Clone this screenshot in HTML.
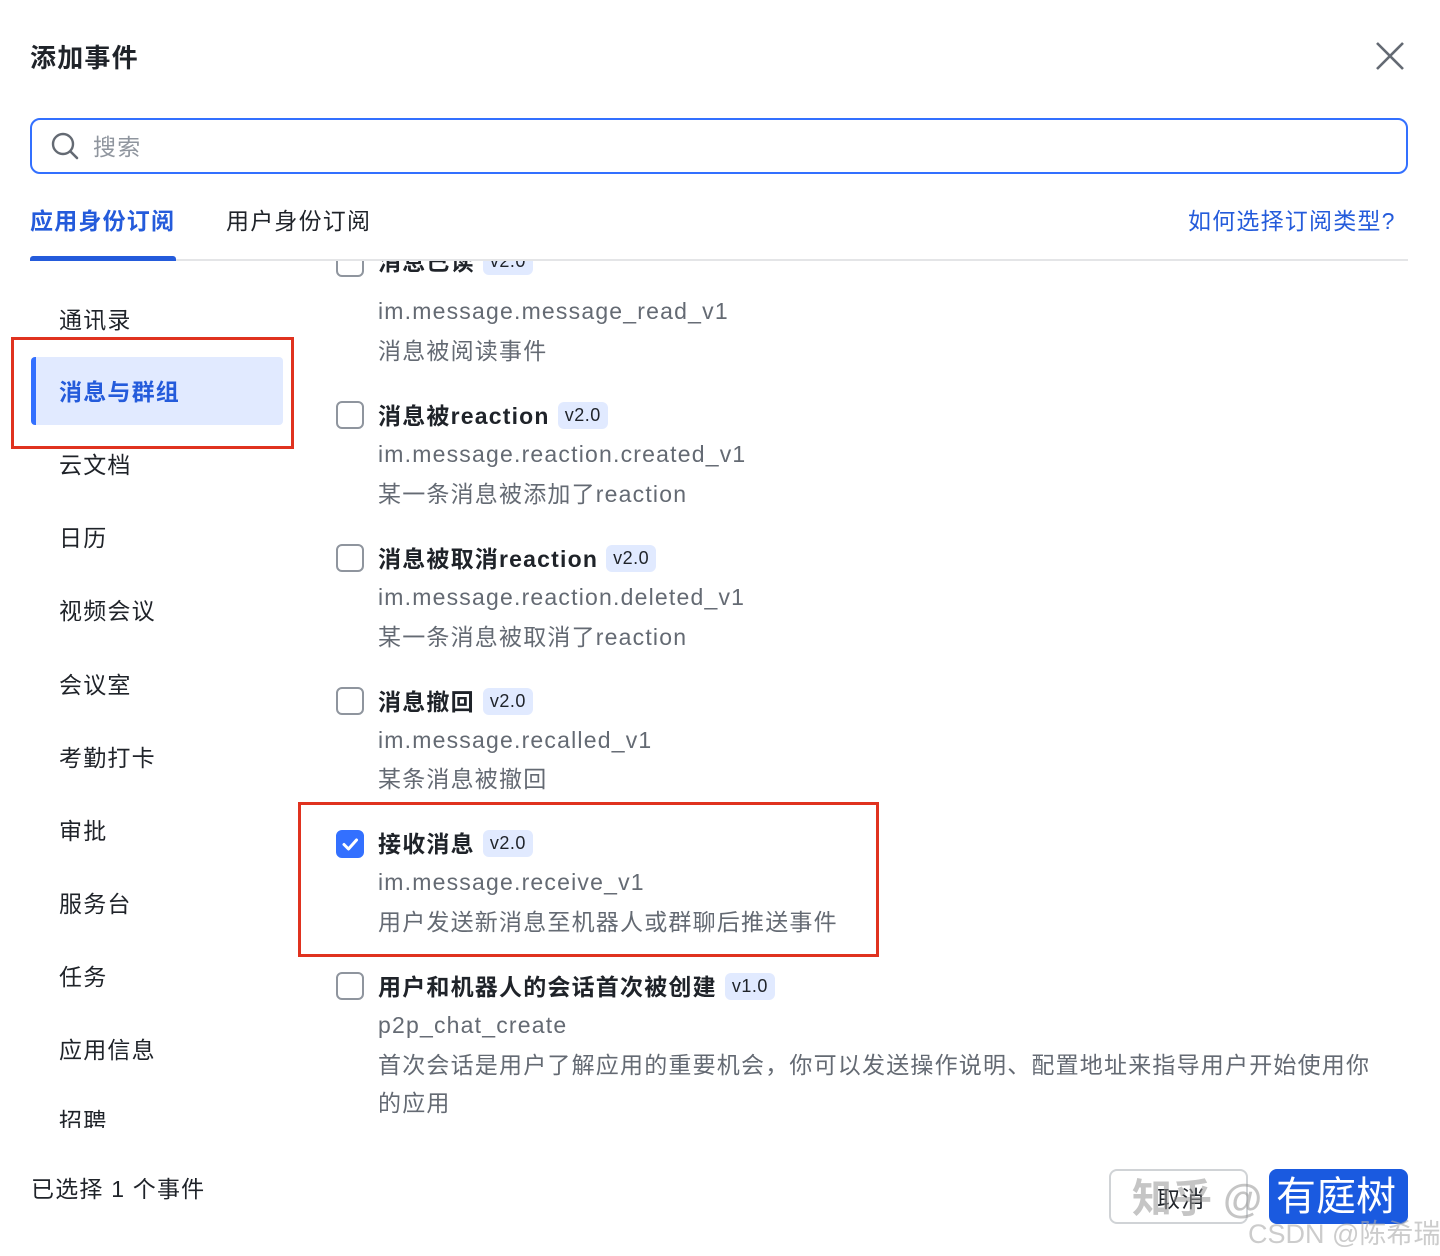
<!DOCTYPE html>
<html><head><meta charset="utf-8">
<style>
*{margin:0;padding:0;box-sizing:border-box}
body{width:1440px;height:1256px;background:#fff;font-family:"Liberation Sans","Noto Sans CJK SC",sans-serif;color:#1f2329;position:relative;overflow:hidden;letter-spacing:1.2px}
.a{position:absolute;white-space:nowrap}
.side{font-size:23px;color:#1f2329;left:59px}
.cb{position:absolute;left:336px;width:28px;height:28px;border:2px solid #8f959e;border-radius:6px;background:#fff}
.t{left:378px;font-size:23px;font-weight:bold;color:#1f2329}
.tag{display:inline-block;background:#e1eaff;color:#1f2329;font-size:18px;font-weight:normal;padding:3px 7px;border-radius:6px;margin-left:8px;vertical-align:3px;letter-spacing:0.5px}
.c{left:378px;font-size:23px;color:#646a73}
.red{position:absolute;border:3px solid #e0321f}
</style></head><body>
<div class="a" style="left:30px;top:38px;font-size:26px;font-weight:bold">添加事件</div>
<svg class="a" style="left:1374px;top:40px" width="32" height="32" viewBox="0 0 32 32"><path d="M3 3L29 29M29 3L3 29" stroke="#646a73" stroke-width="2.6"/></svg>
<div class="a" style="left:30px;top:118px;width:1378px;height:56px;border:2px solid #3370ff;border-radius:10px"></div>
<svg class="a" style="left:50px;top:131px" width="30" height="30" viewBox="0 0 30 30"><circle cx="13" cy="13" r="10" fill="none" stroke="#646a73" stroke-width="2.4"/><path d="M20.5 20.5L27 27" stroke="#646a73" stroke-width="2.6" stroke-linecap="round"/></svg>
<div class="a" style="left:93px;top:128px;font-size:23px;color:#8f959e">搜索</div>
<div class="a" style="left:30px;top:202px;font-size:23px;color:#245bdb;font-weight:bold">应用身份订阅</div>
<div class="a" style="left:226px;top:202px;font-size:23px">用户身份订阅</div>
<div class="a" style="left:1188px;top:202px;font-size:23px;color:#245bdb">如何选择订阅类型?</div>
<div class="a" style="left:30px;top:259px;width:1378px;height:2px;background:#e4e5e7"></div>
<div class="a" style="left:30px;top:256px;width:146px;height:5px;background:#245bdb;border-radius:3px 3px 0 0"></div>

<div class="a side" style="top:301px">通讯录</div>
<div class="a" style="left:31px;top:357px;width:252px;height:68px;background:#e1eaff;border-radius:4px;border-left:5px solid #3370ff"></div>
<div class="a side" style="top:373px;color:#245bdb;font-weight:bold">消息与群组</div>
<div class="red" style="left:11px;top:337px;width:283px;height:112px"></div>
<div class="a side" style="top:446px">云文档</div>
<div class="a side" style="top:519px">日历</div>
<div class="a side" style="top:592px">视频会议</div>
<div class="a side" style="top:666px">会议室</div>
<div class="a side" style="top:739px">考勤打卡</div>
<div class="a side" style="top:812px">审批</div>
<div class="a side" style="top:885px">服务台</div>
<div class="a side" style="top:958px">任务</div>
<div class="a side" style="top:1031px">应用信息</div>
<div class="a" style="left:0;top:1100px;width:300px;height:28px;overflow:hidden"><div class="a side" style="top:2px">招聘</div></div>

<div class="a" style="left:300px;top:261px;width:1140px;height:870px;overflow:hidden">
<div class="cb" style="left:36px;top:-12px"></div>
<div class="a t" style="left:78px;top:-18px">消息已读<span class="tag">v2.0</span></div>
</div>
<div class="a c" style="top:298px">im.message.message_read_v1</div>
<div class="a c" style="top:332px">消息被阅读事件</div>

<div class="cb" style="top:401px"></div>
<div class="a t" style="top:397px">消息被reaction<span class="tag">v2.0</span></div>
<div class="a c" style="top:441px">im.message.reaction.created_v1</div>
<div class="a c" style="top:475px">某一条消息被添加了reaction</div>

<div class="cb" style="top:544px"></div>
<div class="a t" style="top:540px">消息被取消reaction<span class="tag">v2.0</span></div>
<div class="a c" style="top:584px">im.message.reaction.deleted_v1</div>
<div class="a c" style="top:618px">某一条消息被取消了reaction</div>

<div class="cb" style="top:687px"></div>
<div class="a t" style="top:683px">消息撤回<span class="tag">v2.0</span></div>
<div class="a c" style="top:727px">im.message.recalled_v1</div>
<div class="a c" style="top:760px">某条消息被撤回</div>

<div class="cb" style="top:830px;background:#3370ff;border-color:#3370ff"></div>
<svg class="a" style="left:336px;top:830px" width="28" height="28" viewBox="0 0 28 28"><path d="M8 14.5L12.5 19L20.5 10" fill="none" stroke="#fff" stroke-width="3" stroke-linecap="round" stroke-linejoin="round"/></svg>
<div class="a t" style="top:825px">接收消息<span class="tag">v2.0</span></div>
<div class="a c" style="top:869px">im.message.receive_v1</div>
<div class="a c" style="top:903px">用户发送新消息至机器人或群聊后推送事件</div>
<div class="red" style="left:298px;top:802px;width:581px;height:155px"></div>

<div class="cb" style="top:972px"></div>
<div class="a t" style="top:968px">用户和机器人的会话首次被创建<span class="tag">v1.0</span></div>
<div class="a c" style="top:1012px">p2p_chat_create</div>
<div class="a c" style="top:1046px">首次会话是用户了解应用的重要机会，你可以发送操作说明、配置地址来指导用户开始使用你</div>
<div class="a c" style="top:1084px">的应用</div>

<div class="a" style="left:31px;top:1170px;font-size:23px">已选择 1 个事件</div>
<div class="a" style="left:1109px;top:1169px;width:139px;height:55px;border:2px solid #d0d3d6;border-radius:8px;background:#fff"></div>
<div class="a" style="left:1157px;top:1180px;font-size:23px">取消</div>
<div class="a" style="left:1269px;top:1169px;width:139px;height:55px;background:#1a5ae0;border-radius:8px"></div>
<div class="a" style="left:1132px;top:1166px;font-size:40px;color:rgba(150,150,150,0.55);font-weight:bold;letter-spacing:0">知乎 @</div>
<div class="a" style="left:1276px;top:1164px;font-size:40px;color:#fff;letter-spacing:0">有庭树</div>
<div class="a" style="left:1248px;top:1212px;font-size:27px;color:rgba(170,170,170,0.6);letter-spacing:0">CSDN @陈希瑞</div>
</body></html>
